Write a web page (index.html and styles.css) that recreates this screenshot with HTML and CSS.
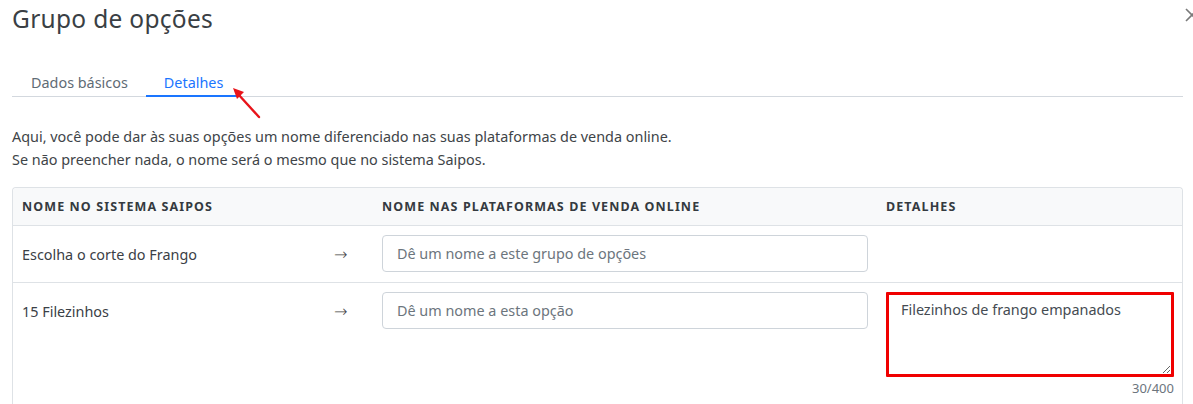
FILE: index.html
```html
<!DOCTYPE html>
<html lang="pt-BR">
<head>
<meta charset="utf-8">
<title>Grupo de opções</title>
<link rel="stylesheet" href="styles.css">
</head>
<body>
<div class="modal">
  <header class="modal-header">
    <h1 class="modal-title">Grupo de opções</h1>
    <button class="close" type="button" aria-label="Fechar">
      <svg width="14" height="14" viewBox="0 0 14 14"><path d="M1 1 L13 13 M13 1 L1 13" stroke="#7a7a7a" stroke-width="1.6" fill="none"/></svg>
    </button>
  </header>
  <nav class="tabs">
    <a class="tab">Dados básicos</a>
    <a class="tab active">Detalhes</a>
  </nav>
  <p class="intro">Aqui, você pode dar às suas opções um nome diferenciado nas suas plataformas de venda online.<br>Se não preencher nada, o nome será o mesmo que no sistema Saipos.</p>
  <div class="table">
    <div class="row head">
      <div class="cell">NOME NO SISTEMA SAIPOS</div>
      <div class="cell"></div>
      <div class="cell">NOME NAS PLATAFORMAS DE VENDA ONLINE</div>
      <div class="cell">DETALHES</div>
    </div>
    <div class="row">
      <div class="cell name">Escolha o corte do Frango</div>
      <div class="cell arrow">→</div>
      <div class="cell"><input class="field" type="text" placeholder="Dê um nome a este grupo de opções"></div>
      <div class="cell"></div>
    </div>
    <div class="row">
      <div class="cell name">15 Filezinhos</div>
      <div class="cell arrow">→</div>
      <div class="cell"><input class="field" type="text" placeholder="Dê um nome a esta opção"></div>
      <div class="cell details">
        <textarea class="area">Filezinhos de frango empanados</textarea>
        <div class="count">30/400</div>
      </div>
    </div>
  </div>
</div>
<svg class="annot" width="40" height="40" viewBox="0 0 40 40">
  <line x1="29" y1="32" x2="8" y2="9" stroke="#e8141a" stroke-width="2.4" stroke-linecap="round"/>
  <polygon points="3,3 14,7 7,14" fill="#e8141a"/>
</svg>
</body>
</html>
```

FILE: styles.css
```css
* { box-sizing: border-box; }
html, body { margin: 0; padding: 0; background: #fff; overflow: hidden; }
body {
  font-family: "Noto Sans", "Open Sans", sans-serif;
  color: #212529;
  width: 1193px;
  height: 404px;
  position: relative;
}
.modal { padding: 0 10px 0 12px; }
.modal-header { display: flex; align-items: center; height: 38px; position: relative; }
.modal-title {
  margin: 0;
  font-size: 24.5px;
  font-weight: 400;
  color: #3a3f44;
  letter-spacing: 0.3px;
  line-height: 1;
  padding-top: 1px;
}
.close {
  position: absolute;
  left: 1173px;
  top: 8px;
  border: 0;
  background: none;
  padding: 0;
  width: 14px;
  height: 14px;
  line-height: 0;
}
.tabs {
  margin-top: 31px;
  display: flex;
  border-bottom: 1px solid #d3d8de;
  height: 28px;
}
.tab {
  padding: 0 18px 0 19px;
  font-size: 14.4px;
  line-height: 27px;
  color: #5f6b75;
  height: 28px;
  margin-bottom: -1px;
}
.tab.active {
  color: #1a75ff;
  border-bottom: 2px solid #1a75ff;
  padding: 0 18px;
}
.intro {
  margin: 28px 0 0;
  font-size: 14.4px;
  line-height: 23px;
  color: #404448;
}
.table {
  margin-top: 16px;
  border: 1px solid #dee2e6;
  border-bottom: 0;
  border-radius: 4px 4px 0 0;
  width: 1171px;
}
.row {
  display: grid;
  grid-template-columns: 310px 50px 504px 1fr;
  border-top: 1px solid #dee2e6;
  min-height: 57px;
  align-items: start;
}
.row.head {
  border-top: 0;
  background: #f8f9fa;
  min-height: 37px;
  align-items: center;
  border-radius: 4px 4px 0 0;
}
.head .cell {
  font-size: 12.5px;
  font-weight: 700;
  letter-spacing: 1.1px;
  color: #343a40;
  padding: 0 9px;
}
.cell { padding: 9px 9px 8px; font-size: 14.4px; color: #3b4046; }
.cell.name, .cell.arrow { line-height: 36px; padding-top: 11px; }
.cell.arrow {
  padding-left: 11px;
  font-family: "DejaVu Sans ExtraLight", "DejaVu Sans", sans-serif;
  font-weight: 200;
  font-size: 16px;
  color: #444;
}
.field {
  display: block;
  width: 486px;
  height: 37px;
  border: 1px solid #ced4da;
  border-radius: 4px;
  padding: 0 14px;
  font-family: inherit;
  font-size: 14.4px;
  color: #495057;
  background: #fff;
}
.field::placeholder { color: #6c757d; }
.details { padding-right: 9px; }
.area {
  display: block;
  width: 288px;
  height: 85px;
  border: 3px solid #f00000;
  border-radius: 1px;
  padding: 5px 12px;
  font-family: inherit;
  font-size: 14.4px;
  color: #454b52;
  resize: vertical;
  background: #fff;
  line-height: 20px;
}
.count {
  text-align: right;
  font-size: 13px;
  color: #6c757d;
  margin-top: 2px;
  width: 288px;
}
.annot { position: absolute; left: 230px; top: 85px; }
```
